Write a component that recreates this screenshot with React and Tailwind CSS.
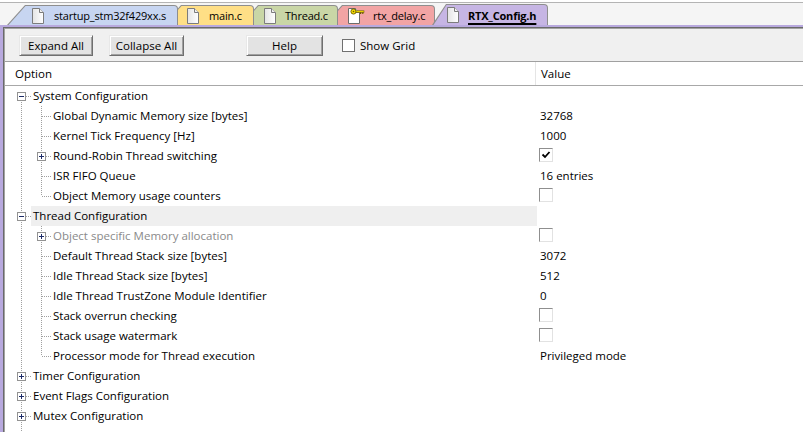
import React from 'react';

const FileIcon = () => (
  <svg width="12" height="16" viewBox="0 0 12 16" className="shrink-0">
    <defs>
      <linearGradient id="pg" x1="0" x2="1" y1="0" y2="0">
        <stop offset="0" stopColor="#e4e4e4" />
        <stop offset="1" stopColor="#ffffff" />
      </linearGradient>
    </defs>
    <path d="M0.5 0.5 H7.5 L11.5 4.5 V15.5 H0.5 Z" fill="url(#pg)" stroke="#7c7c7c" />
    <path d="M7.5 0.5 V4.5 H11.5" fill="#f0f0f0" stroke="#7c7c7c" />
  </svg>
);

const KeyFileIcon = () => (
  <svg width="17" height="16" viewBox="0 0 17 16" className="shrink-0">
    <path d="M0.5 0.5 H7.5 L11.5 4.5 V15.5 H0.5 Z" fill="#ffffff" stroke="#6c6c6c" />
    <path d="M7.5 0.5 V4.5 H11.5" fill="#f0f0f0" stroke="#6c6c6c" />
    <circle cx="5.5" cy="3.5" r="2.6" fill="#f4dc00" stroke="#6b5a00" strokeWidth="0.9" />
    <circle cx="5.5" cy="3.5" r="0.8" fill="#6b5a00" />
    <rect x="8" y="2.8" width="8" height="1.6" fill="#f4dc00" stroke="#6b5a00" strokeWidth="0.6" />
    <rect x="12" y="4.2" width="1.2" height="1.8" fill="#6b5a00" />
    <rect x="14.2" y="4.2" width="1.2" height="1.8" fill="#6b5a00" />
  </svg>
);

const tabs = [
  { name: 'startup_stm32f429xx.s', w: 171, ml: 0, color: 'bg-[#c7d5f1]', pad: 'pl-[25px]', gap: 'gap-[10px]', z: 'z-50', slant: 18 },
  { name: 'main.c', w: 91, ml: -15, color: 'bg-[#ffdf86]', pad: 'pl-[24px]', gap: 'gap-[10px]', z: 'z-40', slant: 18 },
  { name: 'Thread.c', w: 98, ml: -14, color: 'bg-[#c9d6a6]', pad: 'pl-[24px]', gap: 'gap-[9px]', z: 'z-30', slant: 18 },
  { name: 'rtx_delay.c', w: 111, ml: -14, color: 'bg-[#f2a4a4]', pad: 'pl-[24px]', gap: 'gap-[8px]', z: 'z-20', slant: 18, key: true },
  { name: 'RTX_Config.h', w: 116, ml: -3, color: 'bg-[#c6b5e4]', pad: 'pl-[15px]', gap: 'gap-[9px]', z: 'z-[60]', slant: 14, active: true },
];

function Tab({ t }) {
  const outerClip =
    t.slant === 18
      ? '[clip-path:polygon(0_100%,18px_0,100%_0,100%_100%)]'
      : '[clip-path:polygon(0_100%,14px_0,100%_0,100%_100%)]';
  const innerClip =
    t.slant === 18
      ? '[clip-path:polygon(1.5px_100%,18.5px_0,100%_0,100%_100%)]'
      : '[clip-path:polygon(1.5px_100%,14.5px_0,100%_0,100%_100%)]';
  return (
    <div
      className={`relative ${t.z} ${t.active ? 'h-[21px]' : 'h-[20px]'} shrink-0 bg-[#8e8e8e] pt-px pr-px rounded-tr-[4px] ${outerClip}`}
      style={{ width: t.w, marginLeft: t.ml }}
    >
      <div className={`h-full ${t.color} rounded-tr-[3px] ${innerClip} flex items-center ${t.pad} ${t.gap}`}>
        {t.key ? <KeyFileIcon /> : <FileIcon />}
        <span
          className={`whitespace-nowrap text-[11px] tracking-[-0.2px] leading-none ${t.active ? 'font-bold underline underline-offset-[3px] decoration-[1.5px]' : ''}`}
        >
          {t.name}
        </span>
      </div>
    </div>
  );
}

function Button({ children, w }) {
  return (
    <div
      className={`${w} h-[21px] shrink-0 flex items-center justify-center bg-[#e3e3e3] border border-t-[#e8e8e8] border-l-[#e8e8e8] border-r-[#6f6f6f] border-b-[#6f6f6f] shadow-[inset_1px_1px_0_#ffffff,inset_-1px_-1px_0_#a0a0a0] text-[11.5px]`}
    >
      {children}
    </div>
  );
}

function Gutter({ type, box }) {
  const vTop = type === 'tee' || type === 'last' || type === 'pipe';
  const vBot = type === 'tee' || type === 'first' || type === 'pipe';
  const horiz = type !== 'pipe';
  return (
    <svg width="20" height="20" viewBox="0 0 20 20" className="shrink-0" shapeRendering="crispEdges">
      {vTop && <line x1="10.5" y1="0" x2="10.5" y2="10" stroke="#a0a0a0" strokeDasharray="1 1" />}
      {vBot && <line x1="10.5" y1="10" x2="10.5" y2="20" stroke="#a0a0a0" strokeDasharray="1 1" />}
      {horiz && <line x1="11" y1="10.5" x2="20" y2="10.5" stroke="#a0a0a0" strokeDasharray="1 1" />}
      {box && (
        <g>
          <rect x="6.5" y="6.5" width="8" height="8" fill="#ffffff" stroke="#929292" />
          <line x1="8" y1="10.5" x2="13" y2="10.5" stroke="#1b2a66" />
          {box === 'plus' && <line x1="10.5" y1="8" x2="10.5" y2="13" stroke="#1b2a66" />}
        </g>
      )}
    </svg>
  );
}

function ValCheck({ checked }) {
  return (
    <div className="w-[14px] h-[14px] mt-[-3px] ml-[-1px] bg-white border border-t-[#8f8f8f] border-l-[#8f8f8f] border-r-[#e2e2e2] border-b-[#e2e2e2] flex items-center justify-center">
      {checked && (
        <svg width="10" height="10" viewBox="0 0 10 10">
          <path d="M1.5 4.5 L4 7 L8.5 2" fill="none" stroke="#000" strokeWidth="1.8" />
        </svg>
      )}
    </div>
  );
}

const rows = [
  { g: [['first', 'minus']], label: 'System Configuration' },
  { g: [['pipe'], ['tee']], label: 'Global Dynamic Memory size [bytes]', v: '32768' },
  { g: [['pipe'], ['tee']], label: 'Kernel Tick Frequency [Hz]', v: '1000' },
  { g: [['pipe'], ['tee', 'plus']], label: 'Round-Robin Thread switching', check: true, checked: true },
  { g: [['pipe'], ['tee']], label: 'ISR FIFO Queue', v: '16 entries' },
  { g: [['pipe'], ['last']], label: 'Object Memory usage counters', check: true },
  { g: [['tee', 'minus']], label: 'Thread Configuration', hl: true },
  { g: [['pipe'], ['tee', 'plus']], label: 'Object specific Memory allocation', check: true, gray: true },
  { g: [['pipe'], ['tee']], label: 'Default Thread Stack size [bytes]', v: '3072' },
  { g: [['pipe'], ['tee']], label: 'Idle Thread Stack size [bytes]', v: '512' },
  { g: [['pipe'], ['tee']], label: 'Idle Thread TrustZone Module Identifier', v: '0' },
  { g: [['pipe'], ['tee']], label: 'Stack overrun checking', check: true },
  { g: [['pipe'], ['tee']], label: 'Stack usage watermark', check: true },
  { g: [['pipe'], ['last']], label: 'Processor mode for Thread execution', v: 'Privileged mode' },
  { g: [['tee', 'plus']], label: 'Timer Configuration' },
  { g: [['tee', 'plus']], label: 'Event Flags Configuration' },
  { g: [['tee', 'plus']], label: 'Mutex Configuration' },
  { g: [['tee', 'plus']], label: 'Semaphore Configuration' },
];

export default function App() {
  return (
    <div className="w-[803px] h-[432px] overflow-hidden bg-white font-['Open_Sans',sans-serif] text-[11.5px] text-black pt-[2px] flex flex-col">
      {/* tab strip */}
      <div className="h-[23px] shrink-0 border-t border-[#b4b4b4] bg-[#f5f5f5] flex items-end pl-[7px]">
        {tabs.map((t) => (
          <Tab key={t.name} t={t} />
        ))}
      </div>

      {/* framed document */}
      <div className="flex-1 min-h-0 border-t-2 border-l-[3px] border-[#b8a9de]">
        <div className="h-full border-t border-l border-[#6a6a6a]">
          <div className="h-full border-t border-l border-[#a3a3a3] flex flex-col">
            {/* toolbar */}
            <div className="h-[33px] shrink-0 bg-[#f0f0f0] border-b border-[#a0a0a0] flex items-start pt-[6px] pl-[14px]">
              <Button w="w-[74px]">Expand All</Button>
              <div className="w-[16px] shrink-0" />
              <Button w="w-[75px]">Collapse All</Button>
              <div className="w-[62px] shrink-0" />
              <Button w="w-[77px]">Help</Button>
              <div className="w-[19px] shrink-0" />
              <div className="h-[21px] flex items-center gap-[5px]">
                <div className="w-[13px] h-[13px] bg-white border border-[#707070]" />
                <span>Show Grid</span>
              </div>
            </div>

            {/* header */}
            <div className="h-[24px] shrink-0 border-b border-[#a8a8a8] flex">
              <div className="w-[531px] shrink-0 border-r border-[#e5e5e5] pl-[10px] flex items-center">Option</div>
              <div className="flex-1 pl-[5px] flex items-center">Value</div>
            </div>

            {/* tree rows */}
            <div className="flex-1 min-h-0 overflow-hidden">
              {rows.map((r, i) => (
                <div key={i} className="h-[20px] flex">
                  <div className="w-[531px] shrink-0 flex pl-[6px]">
                    {r.g.map((c, j) => (
                      <Gutter key={j} type={c[0]} box={c[1]} />
                    ))}
                    <div
                      className={`flex-1 flex items-center pl-[2px] whitespace-nowrap ${r.hl ? 'bg-[#efefef]' : ''} ${r.gray ? 'text-[#8a8a8a]' : ''}`}
                    >
                      {r.label}
                    </div>
                  </div>
                  <div className={`w-px shrink-0 ${r.hl ? 'bg-[#efefef]' : ''}`} />
                  <div className="flex-1 flex items-center pl-[3px] whitespace-nowrap">
                    {r.check ? <ValCheck checked={r.checked} /> : r.v}
                  </div>
                </div>
              ))}
            </div>
          </div>
        </div>
      </div>
    </div>
  );
}
